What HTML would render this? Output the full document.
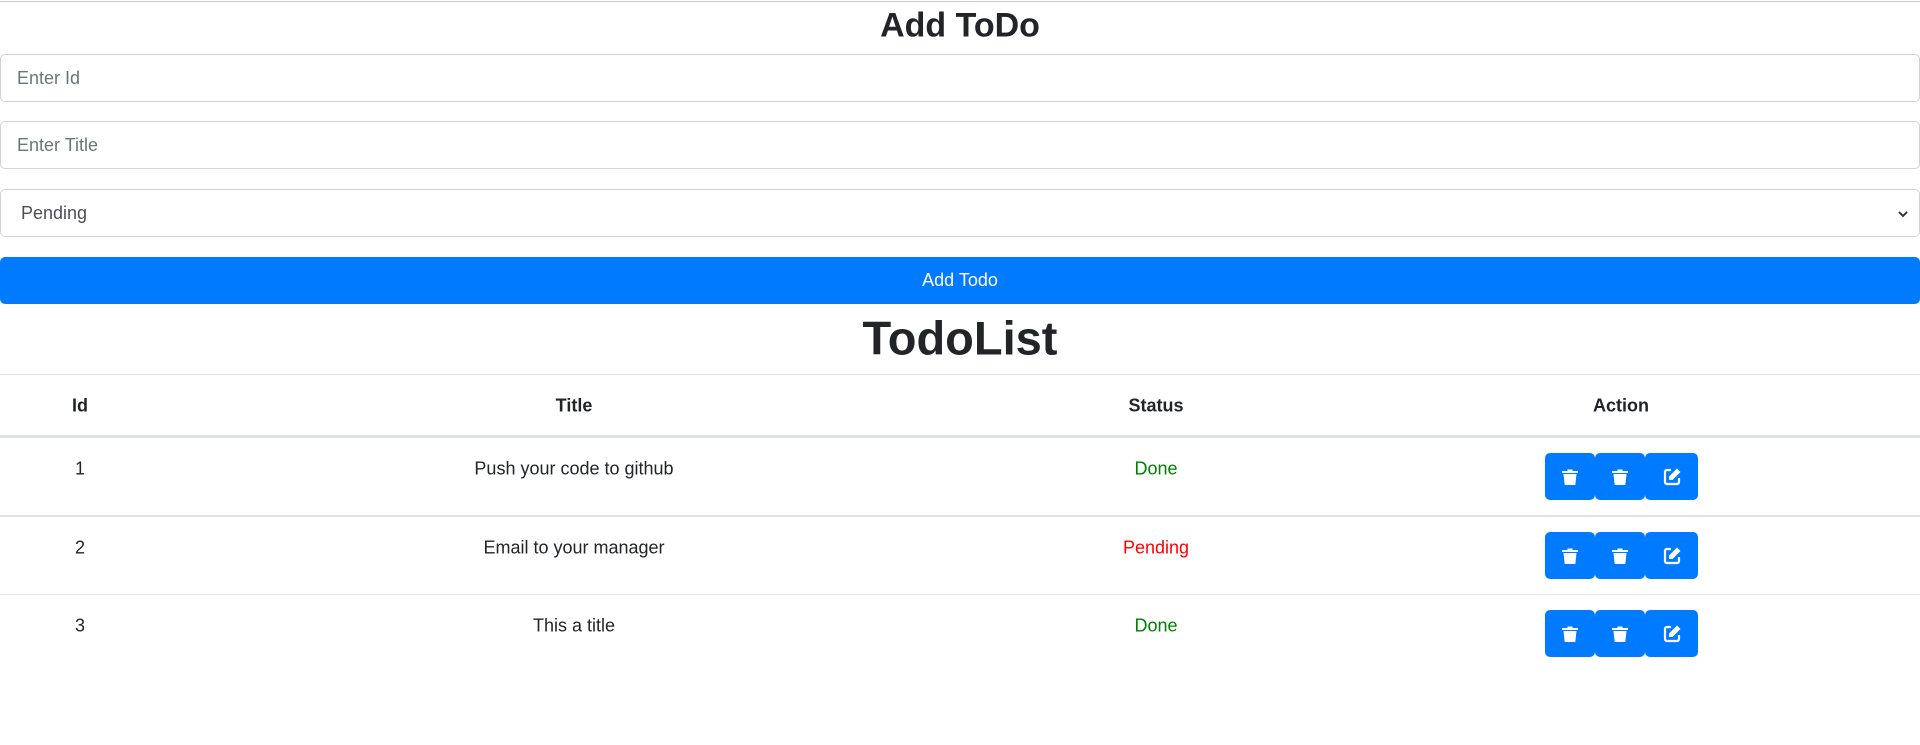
<!DOCTYPE html>
<html><head><meta charset="utf-8"><style>
*{box-sizing:border-box;margin:0;padding:0}
body{width:1920px;height:745px;background:#fff;font-family:"Liberation Sans",sans-serif;color:#212529;position:relative;overflow:hidden}
.abs{position:absolute}
.line{position:absolute;left:0;width:1920px;background:#dee2e6}
.inp{position:absolute;left:0;width:1920px;border:1px solid #ced4da;border-radius:5px;font-size:18px;color:#6c757d;padding-left:16px;display:flex;align-items:center}
.c{position:absolute;text-align:center;font-size:18px;transform:translate(-50%,-50%);white-space:nowrap}
.b{font-weight:bold;color:#212529}
.btn{position:absolute;width:50px;height:47px;background:#007bff;border-radius:5px;display:flex;align-items:center;justify-content:center}
</style></head><body>
<div class="line" style="top:1px;height:1px;background:#ccc"></div>
<div class="c" style="left:960px;top:26px;font-size:34px;font-weight:bold">Add ToDo</div>
<div class="inp" style="top:54px;height:48px">Enter Id</div>
<div class="inp" style="top:121px;height:48px">Enter Title</div>
<div class="inp" style="top:189px;height:48px;color:#495057;padding-left:20px">Pending
<svg class="abs" style="right:10px;top:18px" width="12" height="12" viewBox="0 0 12 12"><path d="M2 4l4 4 4-4" fill="none" stroke="#343a40" stroke-width="2"/></svg></div>
<div class="abs" style="top:257px;left:0;width:1920px;height:47px;background:#007bff;border-radius:5px;color:#fff;font-size:18px;display:flex;align-items:center;justify-content:center">Add Todo</div>
<div class="c" style="left:960px;top:338px;font-size:47px;font-weight:bold">TodoList</div>
<div class="line" style="top:374px;height:1px"></div>
<div class="c b" style="left:80px;top:406px">Id</div>
<div class="c b" style="left:574px;top:406px">Title</div>
<div class="c b" style="left:1156px;top:406px">Status</div>
<div class="c b" style="left:1621px;top:406px">Action</div>
<div class="line" style="top:435px;height:3px"></div>
<div class="line" style="top:515px;height:2px"></div>
<div class="line" style="top:594px;height:1px"></div>

<div class="c" style="left:80px;top:469px">1</div>
<div class="c" style="left:574px;top:469px">Push your code to github</div>
<div class="c" style="left:1156px;top:469px;color:#008000">Done</div>
<div class="c" style="left:80px;top:548px">2</div>
<div class="c" style="left:574px;top:548px">Email to your manager</div>
<div class="c" style="left:1156px;top:548px;color:#ff0000">Pending</div>
<div class="c" style="left:80px;top:626px">3</div>
<div class="c" style="left:574px;top:626px">This a title</div>
<div class="c" style="left:1156px;top:626px;color:#008000">Done</div>

<svg width="0" height="0" style="position:absolute"><defs>
<g id="tr"><path d="M1 3h16v2H1z" fill="#fff"/><path d="M6.5 1.5h5v2h-5z" fill="#fff"/><path d="M2.5 6h13l-1.2 11h-10.6z" fill="#fff"/></g>
<g id="ed"><path d="M9 3H5a2 2 0 0 0-2 2v10a2 2 0 0 0 2 2h10a2 2 0 0 0 2-2v-4" fill="none" stroke="#fff" stroke-width="2.2" stroke-linejoin="round"/><path d="M15 1.5l3.5 3.5-8 8H7v-3.5z" fill="#fff"/></g>
</defs></svg>

<div class="btn" style="left:1545px;top:453px"><svg width="18" height="18" viewBox="0 0 18 18"><use href="#tr"/></svg></div>
<div class="btn" style="left:1595px;top:453px"><svg width="18" height="18" viewBox="0 0 18 18"><use href="#tr"/></svg></div>
<div class="btn" style="left:1645px;top:453px;width:53px"><svg width="20" height="20" viewBox="0 0 20 20"><use href="#ed"/></svg></div>
<div class="btn" style="left:1545px;top:532px"><svg width="18" height="18" viewBox="0 0 18 18"><use href="#tr"/></svg></div>
<div class="btn" style="left:1595px;top:532px"><svg width="18" height="18" viewBox="0 0 18 18"><use href="#tr"/></svg></div>
<div class="btn" style="left:1645px;top:532px;width:53px"><svg width="20" height="20" viewBox="0 0 20 20"><use href="#ed"/></svg></div>
<div class="btn" style="left:1545px;top:610px"><svg width="18" height="18" viewBox="0 0 18 18"><use href="#tr"/></svg></div>
<div class="btn" style="left:1595px;top:610px"><svg width="18" height="18" viewBox="0 0 18 18"><use href="#tr"/></svg></div>
<div class="btn" style="left:1645px;top:610px;width:53px"><svg width="20" height="20" viewBox="0 0 20 20"><use href="#ed"/></svg></div>
</body></html>
